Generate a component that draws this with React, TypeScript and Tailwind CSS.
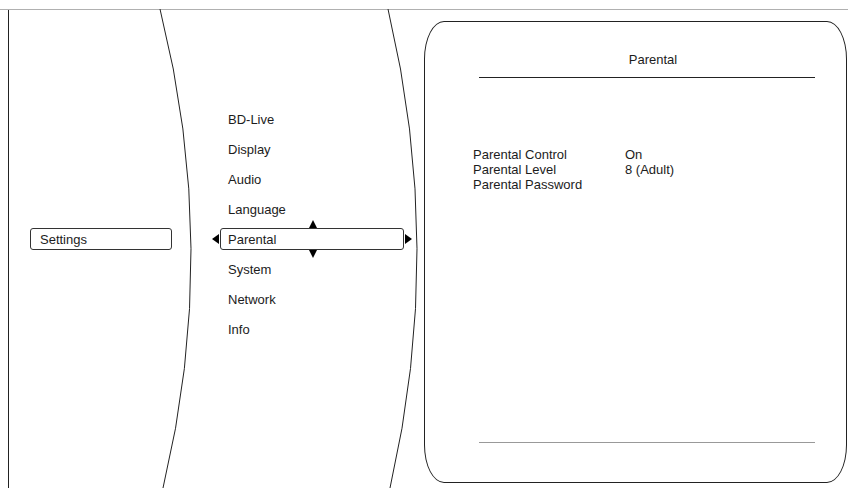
import React from 'react';

const menu = ['BD-Live', 'Display', 'Audio', 'Language', 'Parental', 'System', 'Network', 'Info'];

const rows: [string, string][] = [
  ['Parental Control', 'On'],
  ['Parental Level', '8 (Adult)'],
  ['Parental Password', ''],
];

export default function App() {
  return (
    <div
      className="relative w-[848px] h-[488px] bg-white pt-[9px] overflow-hidden text-[#1c1c1c]"
      style={{ fontFamily: '"Liberation Sans", Arial, sans-serif' }}
    >
      {/* curved dividers */}
      <svg className="absolute inset-0 pointer-events-none" width="848" height="488" viewBox="0 0 848 488">
        <path d="M160 9 Q220.5 249 163 488" fill="none" stroke="#222" strokeWidth="1" />
        <path d="M388 9 Q445 249 390 488" fill="none" stroke="#222" strokeWidth="1" />
      </svg>

      <div className="border-t border-[#b0b0b0] h-full">
        <div className="ml-[8px] border-l border-[#222] h-full flex text-[13px] leading-[15px]">
          {/* Left column */}
          <div className="w-[182px] shrink-0 pt-[218px]">
            <div className="ml-[21px] w-[142px] h-[22px] border border-[#333] rounded-[3px] pl-[9px] flex items-center">
              Settings
            </div>
          </div>

          {/* Menu column */}
          <div className="w-[233px] shrink-0 pt-[94px]">
            <div className="ml-[29px] flex flex-col">
              {menu.map((m) => (
                <div key={m} className="h-[30px] flex items-center">
                  {m === 'Parental' ? (
                    <div className="relative w-[184px] h-[22px] border border-[#333] rounded-[3px] pl-[7px] flex items-center">
                      {m}
                      <span className="absolute left-[-9px] top-1/2 -translate-y-1/2 w-0 h-0 border-y-[5px] border-y-transparent border-r-[7px] border-r-black" />
                      <span className="absolute right-[-9px] top-1/2 -translate-y-1/2 w-0 h-0 border-y-[5px] border-y-transparent border-l-[7px] border-l-black" />
                      <span className="absolute left-[88px] top-[-9px] w-0 h-0 border-x-[4.5px] border-x-transparent border-b-[8px] border-b-black" />
                      <span className="absolute left-[88px] bottom-[-9px] w-0 h-0 border-x-[4.5px] border-x-transparent border-t-[8px] border-t-black" />
                    </div>
                  ) : (
                    <div className="pl-[8px]">{m}</div>
                  )}
                </div>
              ))}
            </div>
          </div>

          {/* Detail panel */}
          <div className="flex-1 mt-[11px] mb-[5px] mr-[1px] border border-[#222] rounded-[20px/38px] flex flex-col">
            <div className="pt-[30px] pl-[54px] pr-[31px]">
              <div className="text-center pl-[12px]">Parental</div>
              <div className="mt-[10px] h-px bg-[#222]" />
            </div>
            <div className="mt-[69px] pl-[48px] flex flex-col">
              {rows.map(([k, v]) => (
                <div key={k} className="flex h-[15px]">
                  <span className="w-[152px]">{k}</span>
                  <span>{v}</span>
                </div>
              ))}
            </div>
            <div className="mt-auto mb-[39px] ml-[54px] mr-[31px] h-px bg-[#999]" />
          </div>
        </div>
      </div>
    </div>
  );
}
